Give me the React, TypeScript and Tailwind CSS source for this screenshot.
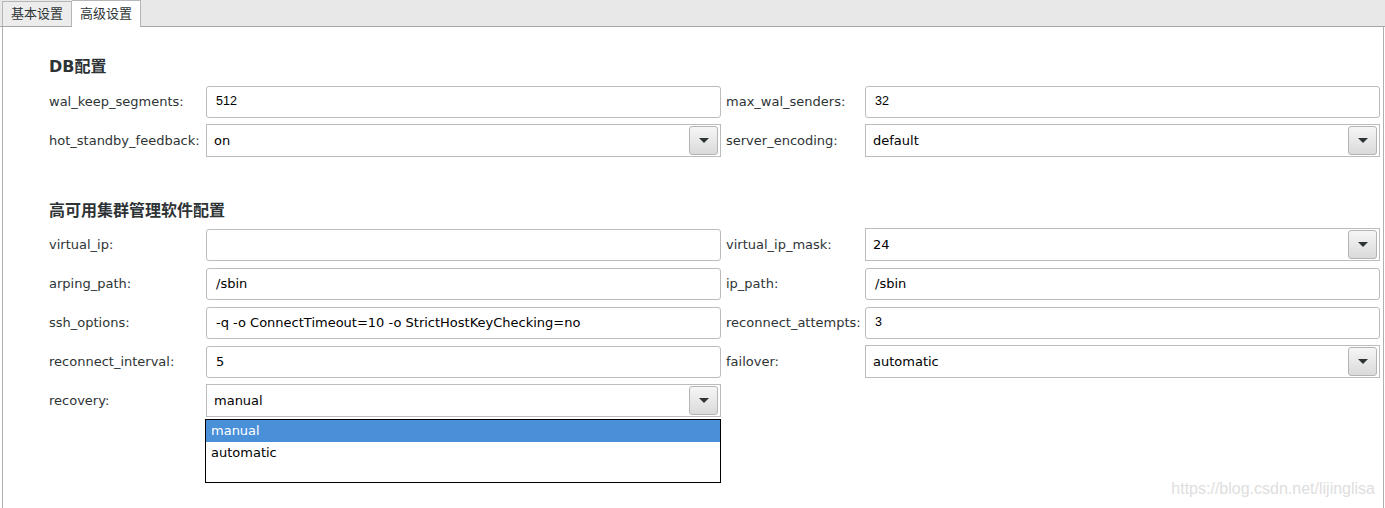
import React from 'react';

type Field = {
  label: string;
  value: string;
  kind: 'text' | 'num' | 'combo';
};

const dbRows: [Field, Field][] = [
  [
    { label: 'wal_keep_segments:', value: '512', kind: 'num' },
    { label: 'max_wal_senders:', value: '32', kind: 'num' },
  ],
  [
    { label: 'hot_standby_feedback:', value: 'on', kind: 'combo' },
    { label: 'server_encoding:', value: 'default', kind: 'combo' },
  ],
];

const haRows: [Field, Field | null][] = [
  [
    { label: 'virtual_ip:', value: '', kind: 'text' },
    { label: 'virtual_ip_mask:', value: '24', kind: 'combo' },
  ],
  [
    { label: 'arping_path:', value: '/sbin', kind: 'text' },
    { label: 'ip_path:', value: '/sbin', kind: 'text' },
  ],
  [
    { label: 'ssh_options:', value: '-q -o ConnectTimeout=10 -o StrictHostKeyChecking=no', kind: 'text' },
    { label: 'reconnect_attempts:', value: '3', kind: 'num' },
  ],
  [
    { label: 'reconnect_interval:', value: '5', kind: 'text' },
    { label: 'failover:', value: 'automatic', kind: 'combo' },
  ],
  [{ label: 'recovery:', value: 'manual', kind: 'combo' }, null],
];

const sans = "font-['DejaVu_Sans','Noto_Sans_CJK_SC',sans-serif]";

function ComboButton() {
  return (
    <span className="w-[29px] h-[29px] flex items-center justify-center rounded-[3px] border border-[#b4b4b4] bg-gradient-to-b from-[#f6f6f6] to-[#dadada]">
      <span className="w-0 h-0 border-l-[5px] border-r-[5px] border-t-[5px] border-l-transparent border-r-transparent border-t-[#2e3436]" />
    </span>
  );
}

function Control({ f, popup }: { f: Field; popup?: boolean }) {
  if (f.kind === 'combo') {
    return (
      <div className="relative h-[33px]">
        <div className="h-full flex items-center justify-between border border-[#bcbcbc] bg-white pl-[7px] pr-[2px]">
          <span className="text-[13px] text-[#000]">{f.value}</span>
          <ComboButton />
        </div>
        {popup && (
          <div className="absolute left-[-1px] right-0 top-[35px] h-[64px] border border-black bg-white z-10">
            <div className="h-[22px] flex items-center pl-[5px] bg-[#4a90d9] text-[13px] text-white">manual</div>
            <div className="h-[22px] flex items-center pl-[5px] text-[13px] text-black">automatic</div>
          </div>
        )}
      </div>
    );
  }
  return (
    <div
      className={`h-[32px] flex items-center rounded-[3px] border border-[#bcbcbc] bg-white pl-[9px] text-black ${
        f.kind === 'num' ? "font-['Liberation_Sans',sans-serif] text-[12.5px]" : 'text-[13px]'
      }`}
    >
      {f.value}
    </div>
  );
}

function Row({ left, right }: { left: Field; right: Field | null }) {
  return (
    <div className="grid grid-cols-[157px_515px_144px_515px] items-center h-[33px]">
      <span className="text-[13px] text-[#2e3436]">{left.label}</span>
      <Control f={left} popup={left.label === 'recovery:'} />
      {right ? (
        <span className="text-[13px] text-[#2e3436] pl-[5px]">{right.label}</span>
      ) : (
        <span />
      )}
      {right ? <Control f={right} /> : <span />}
    </div>
  );
}

export default function App() {
  return (
    <main className={`w-[1385px] h-[508px] bg-white overflow-hidden flex flex-col ${sans}`}>
      {/* ─── tabs ─────────────────────────────── */}
      <div className="h-[27px] flex items-end bg-[#e8e8e8] border-b border-[#a8a8a8] pl-[2px] shrink-0">
        <div className="h-[25px] px-[8px] flex items-center border border-b-0 border-[#b6b6b6] bg-[#ececec] text-[13px] text-[#2e3436]">
          基本设置
        </div>
        <div className="h-[27px] px-[8px] flex items-center border border-b-0 border-l-0 border-[#b6b6b6] bg-white text-[13px] text-[#2e3436] mb-[-1px]">
          高级设置
        </div>
      </div>

      {/* ─── panel ────────────────────────────── */}
      <div className="relative flex-1 ml-[2px] mr-[1px] border-l border-r border-[#b0b0b0] pl-[46px] pt-[29px]">
        <h2 className="text-[16px] font-bold text-[#2e3436] leading-[22px] mb-[7px]">DB配置</h2>
        <div className="flex flex-col gap-[6px]">
          {dbRows.map(([l, r]) => (
            <Row key={l.label} left={l} right={r} />
          ))}
        </div>

        <h2 className="text-[16px] font-bold text-[#2e3436] leading-[22px] mt-[43px] mb-[6px]">
          高可用集群管理软件配置
        </h2>
        <div className="flex flex-col gap-[6px]">
          {haRows.map(([l, r]) => (
            <Row key={l.label} left={l} right={r} />
          ))}
        </div>

        <span className="absolute right-[8px] bottom-[7px] font-['Liberation_Sans',sans-serif] text-[16px] text-[#dedede]">
          https://blog.csdn.net/lijinglisa
        </span>
      </div>
    </main>
  );
}
